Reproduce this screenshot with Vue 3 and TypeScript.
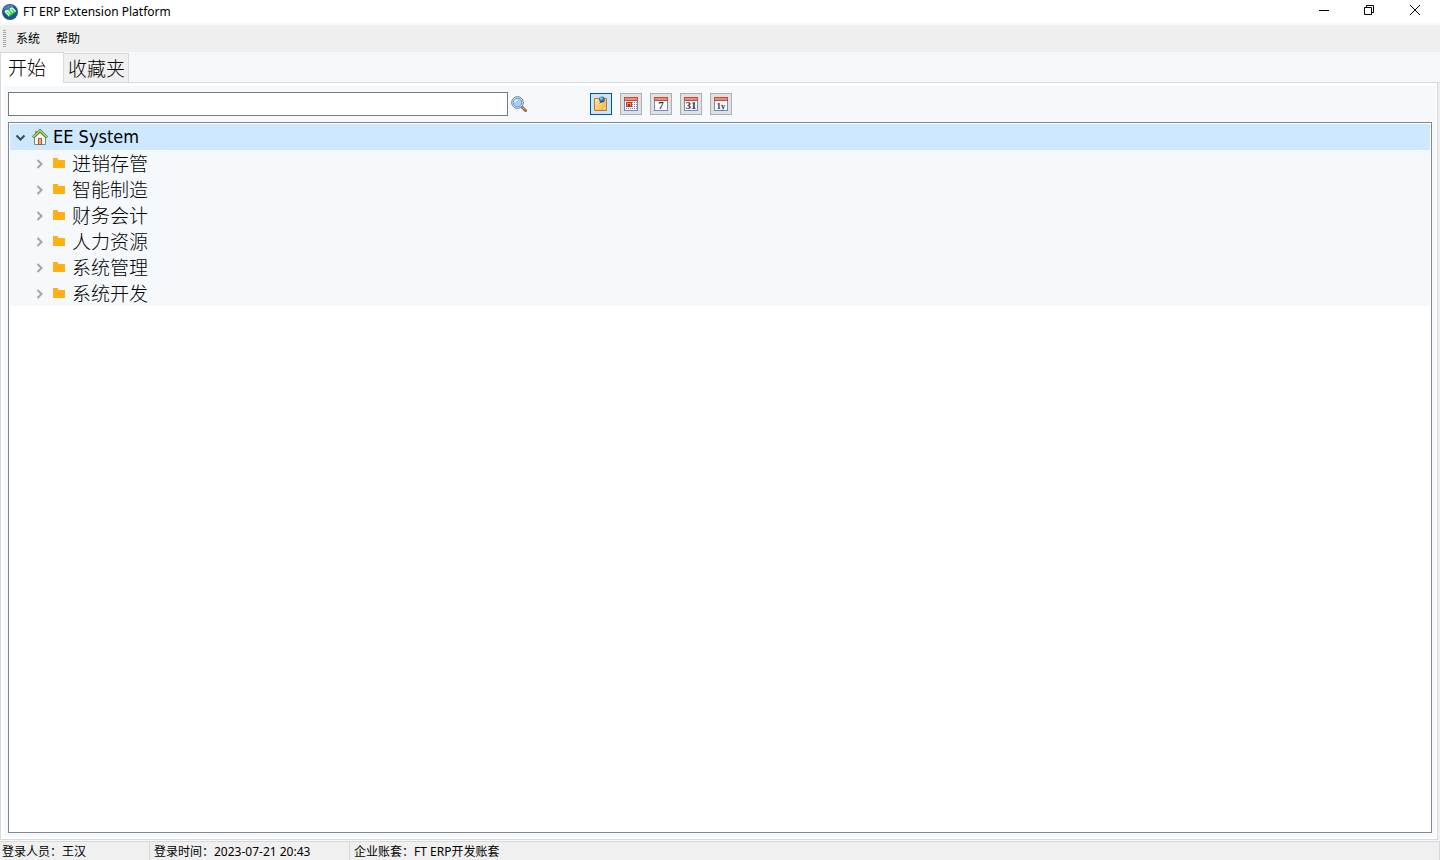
<script setup lang="ts">
import { ref } from 'vue'

const keyword = ref('')
const activeTab = ref(0)
const activeRange = ref(0)
const tabs: string[] = ['开始', '收藏夹']
const modules: string[] = ['进销存管', '智能制造', '财务会计', '人力资源', '系统管理', '系统开发']

interface Range {
  label: string
  text: string
}
const ranges: Range[] = [
  { label: '全部', text: '' },
  { label: '当天', text: '' },
  { label: '七天', text: '7' },
  { label: '一月', text: '31' },
  { label: '一年', text: '1y' },
]
</script>

<template>
  <div class="window">
    <header class="titlebar">
      <svg class="logo" width="16" height="16" viewBox="0 0 16 16" aria-hidden="true">
        <circle cx="8" cy="8" r="8" fill="#245292" />
        <path d="M1 6a7.300 7.300 0 0 1 11-4L6 5z" fill="#4f82b8" />
        <path d="M2 7.500L10 3l4.500 4.500L7 13z" fill="#12dc2e" />
        <path d="M3 7l4 4.500M5.500 6.500L8.500 10M8 5l3 3.500M3 7.300l2.500-1M8 5l2.500-1 3 3.500" fill="none" stroke="#fff" stroke-width="1.200" />
      </svg>
      <span class="title">FT ERP Extension Platform</span>
      <div class="controls">
        <button aria-label="最小化">
          <svg width="12" height="12" viewBox="0 0 12 12"><path d="M2 6.500h10" /></svg>
        </button>
        <button aria-label="还原">
          <svg width="12" height="12" viewBox="0 0 12 12"><path d="M1.500 3.500h7v7h-7zM3.500 3.500v-2h7v7h-2" /></svg>
        </button>
        <button aria-label="关闭">
          <svg width="12" height="12" viewBox="0 0 12 12"><path d="M1 1l10 10M11 1L1 11" /></svg>
        </button>
      </div>
    </header>

    <nav class="menubar">
      <span class="grip"></span>
      <button>系统</button>
      <button>帮助</button>
    </nav>

    <div class="tabs" role="tablist">
      <button
        v-for="(tab, i) in tabs"
        :key="tab"
        role="tab"
        :aria-selected="activeTab === i"
        :class="{ active: activeTab === i }"
        @click="activeTab = i"
      >{{ tab }}</button>
    </div>

    <main class="page">
      <div class="panel">
        <div class="toolbar">
          <input v-model="keyword" class="search" type="text" aria-label="搜索" />
          <button class="find" aria-label="查找">
            <svg width="16" height="16" viewBox="0 0 16 16">
              <path d="M10 10l1.500 1.500" stroke="#777f91" stroke-width="2" />
              <path d="M11.500 11.500l3 3" stroke="#a8642f" stroke-width="3" stroke-linecap="round" />
              <path d="M11.500 11.200l2.500 2.500" stroke="#f2b778" stroke-width="1" />
              <circle cx="6.500" cy="6.500" r="5.800" fill="#fff" stroke="#5f7198" />
              <circle cx="6.500" cy="6.500" r="4.300" fill="#a5d0fa" stroke="#5b90d8" />
              <path d="M3.800 6a3 3 0 0 1 2.700-2.200" fill="none" stroke="#edf8ff" stroke-width="1.500" />
            </svg>
          </button>
          <div class="ranges">
            <button
              v-for="(range, i) in ranges"
              :key="range.label"
              :aria-label="range.label"
              :aria-pressed="activeRange === i"
              :class="{ active: activeRange === i }"
              @click="activeRange = i"
            >
              <svg v-if="i === 0" width="16" height="16" viewBox="0 0 16 16">
                <defs>
                  <linearGradient id="note" x1="0" y1="0" x2="1" y2="1">
                    <stop stop-color="#ffe9a6" /><stop offset="1" stop-color="#f5ad3d" />
                  </linearGradient>
                </defs>
                <path d="M1.500 2.500h12v12h-12z" fill="url(#note)" stroke="#b87932" />
                <path d="M11 14v-2.500h2.500z" fill="#fff1be" />
                <path d="M6.500 7.500l2-2" stroke="#596d82" />
                <circle cx="9" cy="3.500" r="3" fill="#3d70a8" />
                <circle cx="8.300" cy="2.500" r="1.300" fill="#9fc7ed" />
                <path d="M7 6l4-.5" stroke="#284f80" />
              </svg>
              <svg v-else width="16" height="16" viewBox="0 0 16 16">
                <rect x="1.500" y="1.500" width="13" height="13" fill="#fafcff" stroke="#6f8cba" />
                <path d="M1 1h14v4H1z" fill="#cb4936" />
                <path d="M2 2h12v2H2z" fill="#e88e79" />
                <template v-if="i === 1">
                  <path d="M9 6.500h5M9 8.500h5M9 10.500h5M3 12.500h11" stroke="#7e8faf" stroke-dasharray="1 1" />
                  <rect x="3.500" y="6.500" width="5" height="4" fill="#e98972" stroke="#c73829" />
                  <path d="M5 8h2v2H5z" fill="#a91f18" />
                </template>
                <text v-else x="8" y="13" text-anchor="middle" :class="{ year: i === 4 }">{{ range.text }}</text>
              </svg>
            </button>
          </div>
        </div>

        <div class="treebox">
          <ul class="tree" role="tree">
            <li role="treeitem" aria-expanded="true" aria-selected="true">
              <div class="row root">
                <svg class="chevron" width="10" height="10" viewBox="0 0 10 10"><path d="M1.500 3.500l4 4 4-4" fill="none" stroke="#404953" stroke-width="2" /></svg>
                <svg class="home" width="16" height="16" viewBox="0 0 16 16">
                  <path d="M2.500 8L8 3l5.500 5v7.500h-11z" fill="#f5f8fc" stroke="#7186a2" />
                  <path d="M3 2h2v3H3z" fill="#d27960" />
                  <path d="M1 8.500L8 1.800l7 6.700" fill="none" stroke="#547c2b" stroke-width="3" />
                  <path d="M1.300 8L8 1.600 14.700 8" fill="none" stroke="#b2dd70" stroke-width="1.400" />
                  <path d="M6.500 9.500h3v6h-3z" fill="#f6b368" stroke="#a95432" />
                </svg>
                <span>EE System</span>
              </div>
              <ul role="group">
                <li v-for="name in modules" :key="name" class="row child" role="treeitem" aria-expanded="false">
                  <svg class="chevron" width="10" height="10" viewBox="0 0 10 10"><path d="M2.500 2l4 4-4 4" fill="none" stroke="#a3a5a7" stroke-width="2" /></svg>
                  <svg class="folder" width="12" height="10" viewBox="0 0 12 10"><path d="M0 0h5v2h7v8H0z" fill="#ffb014" /></svg>
                  <span>{{ name }}</span>
                </li>
              </ul>
            </li>
          </ul>
        </div>
      </div>
    </main>

    <footer class="status">
      <span class="user">登录人员：王汉</span>
      <span class="time">登录时间：2023-07-21 20:43</span>
      <span class="account">企业账套：FT ERP开发账套</span>
    </footer>
  </div>
</template>

<style>
body {
  background: #f5f9fc;
}
</style>

<style scoped>
.window {
  display: flex;
  flex-direction: column;
  min-height: 100vh;
  background: #f5f9fc;
  color: #000;
  font: 12px/18px "Noto Sans", "Noto Sans CJK SC", sans-serif;
  box-sizing: border-box;
}
.window * {
  box-sizing: border-box;
}
button {
  margin: 0;
  padding: 0;
  border: 0;
  background: none;
  color: inherit;
  font: inherit;
}
svg {
  display: block;
  flex: none;
}
.chevron {
  overflow: visible;
}
.titlebar {
  display: flex;
  align-items: center;
  height: 23px;
  padding-left: 2px;
  background: #fff;
}
.title {
  margin-left: 5px;
}
.controls {
  display: flex;
  height: 20px;
  margin: 0 2px 3px auto;
}
.controls button {
  display: grid;
  place-items: center;
  width: 46px;
}
.controls path {
  fill: none;
  stroke: #000;
}
.menubar {
  display: flex;
  align-items: center;
  gap: 16px;
  height: 27px;
  margin-top: 2px;
  padding-left: 3px;
  background: #efefef;
}
.grip {
  width: 3px;
  height: 17px;
  margin-right: -6px;
  background: repeating-linear-gradient(#a5a5a5 0 1px, #efefef 1px 2px);
}
.tabs {
  display: flex;
  align-items: flex-end;
  height: 31px;
  border-bottom: 1px solid #d9d9d9;
  font: 19px/26px "Noto Sans CJK SC", sans-serif;
  font-weight: 300;
}
.tabs button {
  height: 29px;
  padding: 0 3px 0 4px;
  border: 1px solid #d9d9d9;
  border-left: 0;
  border-bottom: 0;
  background: #f0f0f0;
}
.tabs .active {
  height: 31px;
  margin-bottom: -1px;
  padding: 0 17px 2px 7px;
  border-left: 1px solid #d9d9d9;
  background: #fff;
}
.page {
  display: flex;
  flex: 1;
  padding: 3px 1px 2px 3px;
  border: 1px solid #d9d9d9;
  border-top: 0;
  margin-right: 2px;
  background: #fff;
  box-shadow: 2px 0 #efefef;
}
.panel {
  display: flex;
  flex: 1;
  flex-direction: column;
  padding: 6px 4px 4px;
  background: #f5f9fc;
}
.toolbar {
  display: flex;
  height: 24px;
  margin-bottom: 6px;
}
.search {
  width: 500px;
  height: 24px;
  padding: 0 4px;
  border: 1px solid #7a7a7a;
  border-radius: 0;
  outline: 0;
  background: #fff;
  font: inherit;
}
.find {
  margin-left: 3px;
}
.ranges {
  display: flex;
  align-items: center;
  gap: 8px;
  margin-left: 63px;
}
.ranges button {
  display: grid;
  place-items: center;
  width: 22px;
  height: 22px;
  border: 1px solid #adadad;
  background: #e1e1e1;
}
.ranges .active {
  border-color: #005499;
  background: #cce4f7;
}
.ranges text {
  fill: #303b4b;
  font: bold 11px "Liberation Serif", serif;
}
.ranges .year {
  font-size: 9px;
}
.treebox {
  flex: 1;
  padding: 1px;
  border: 1px solid #828790;
  background: #fff;
}
.tree,
.tree ul {
  margin: 0;
  padding: 0;
  list-style: none;
}
.row {
  display: flex;
  align-items: center;
  height: 26px;
  background: #f5f9fc;
  white-space: nowrap;
}
.root {
  padding-left: 5px;
  background: #cde8ff;
  font: 18px/26px "DejaVu Sans Condensed", "DejaVu Sans", sans-serif;
  font-stretch: condensed;
}
.home {
  margin: 0 5px 0 7px;
}
.child {
  padding-left: 25px;
  font: 19px/26px "Noto Sans CJK SC", sans-serif;
  font-weight: 300;
}
.folder {
  margin: 0 7px 0 8px;
}
.status {
  display: flex;
  height: 19px;
  margin-top: 1px;
  padding-left: 2px;
  border-top: 1px solid #d9d9d9;
  background: #f0f0f0;
  line-height: 20px;
}
.status span {
  border-right: 1px solid #d9d9d9;
}
.user {
  width: 148px;
}
.time {
  width: 200px;
  padding-left: 4px;
}
.account {
  flex: 1;
  padding-left: 4px;
}
</style>
